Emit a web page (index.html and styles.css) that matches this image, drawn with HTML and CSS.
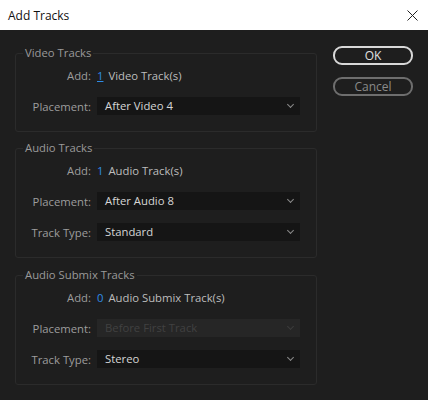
FILE: index.html
```html
<!DOCTYPE html>
<html lang="en">
<head>
  <meta charset="UTF-8" />
  <title>Add Tracks</title>
  <link rel="stylesheet" href="styles.css">
</head>
<body>
  <!-- TITLE BAR -->
  <div class="titlebar">
    <span class="titlebar-text">Add Tracks</span>
    <svg class="close" width="11" height="11" viewBox="0 0 11 11">
      <path d="M0.5 0.5 L10.5 10.5 M10.5 0.5 L0.5 10.5" stroke="#222" stroke-width="1" fill="none" />
    </svg>
  </div>

  <div class="dialog">
    <div class="groups">
      <!-- VIDEO -->
      <fieldset class="group">
        <legend>Video Tracks</legend>
        <div class="row">
          <span class="label">Add:</span>
          <span class="value"><span class="num num-active">1</span> Video Track(s)</span>
        </div>
        <div class="row">
          <span class="label">Placement:</span>
          <div class="select">After Video 4</div>
        </div>
      </fieldset>

      <!-- AUDIO -->
      <fieldset class="group">
        <legend>Audio Tracks</legend>
        <div class="row">
          <span class="label">Add:</span>
          <span class="value"><span class="num">1</span> Audio Track(s)</span>
        </div>
        <div class="row">
          <span class="label">Placement:</span>
          <div class="select">After Audio 8</div>
        </div>
        <div class="row">
          <span class="label">Track Type:</span>
          <div class="select">Standard</div>
        </div>
      </fieldset>

      <!-- SUBMIX -->
      <fieldset class="group">
        <legend>Audio Submix Tracks</legend>
        <div class="row">
          <span class="label">Add:</span>
          <span class="value"><span class="num">0</span> Audio Submix Track(s)</span>
        </div>
        <div class="row">
          <span class="label">Placement:</span>
          <div class="select disabled">Before First Track</div>
        </div>
        <div class="row">
          <span class="label">Track Type:</span>
          <div class="select">Stereo</div>
        </div>
      </fieldset>
    </div>

    <div class="buttons">
      <div class="btn btn-ok">OK</div>
      <div class="btn btn-cancel">Cancel</div>
    </div>
  </div>
</body>
</html>
```

FILE: styles.css
```css
body {
  margin: 0;
  background: #1e1e1e;
  font-family: "Open Sans", "Noto Sans", sans-serif;
  font-size: 11.3px;
  overflow: hidden;
}

.titlebar {
  height: 30px;
  background: #fff;
  display: flex;
  align-items: center;
  justify-content: space-between;
  padding: 0 10px 0 8px;
}

.titlebar-text {
  color: #111;
  font-size: 12px;
}

.dialog {
  display: flex;
  align-items: flex-start;
  padding: 15px 0 0 15px;
}

.groups {
  width: 302px;
  display: flex;
  flex-direction: column;
  gap: 8px;
}

.group {
  margin: 0;
  border: 1px solid #2b2b2b;
  border-radius: 3px;
  padding: 5px 15px 16px 0;
  display: flex;
  flex-direction: column;
  gap: 13px;
}

.group:last-child {
  margin-top: 1px;
}

.group legend {
  color: #9a9a9a;
  padding: 0 2px;
  margin-left: 7px;
  line-height: 16px;
}

.row {
  display: grid;
  grid-template-columns: 75px 203px;
  column-gap: 6px;
  align-items: center;
  height: 18px;
}

.label {
  text-align: right;
  color: #9d9d9d;
}

.value {
  color: #bdbdbd;
}

.num {
  color: #2e8be6;
  margin-right: 2px;
}

.num-active {
  text-decoration: underline;
}

.select {
  height: 18px;
  line-height: 18px;
  background: #151515;
  color: #d6d6d6;
  padding: 0 8px;
  position: relative;
}

.select::after {
  content: "";
  position: absolute;
  right: 7px;
  top: 5px;
  width: 4px;
  height: 4px;
  border-right: 1px solid #8a8a8a;
  border-bottom: 1px solid #8a8a8a;
  transform: rotate(45deg);
}

.select.disabled {
  background: #262626;
  color: #414141;
}

.select.disabled::after {
  border-color: #3c3c3c;
}

.buttons {
  margin: 1px 0 0 16px;
  display: flex;
  flex-direction: column;
  gap: 12px;
}

.btn {
  width: 76px;
  height: 15px;
  line-height: 15px;
  font-size: 12px;
  text-align: center;
  border-radius: 9px;
}

.btn-ok {
  border: 2px solid #d8d8d8;
  color: #e0e0e0;
}

.btn-cancel {
  border: 2px solid #6e6e6e;
  color: #8a8a8a;
}
```
